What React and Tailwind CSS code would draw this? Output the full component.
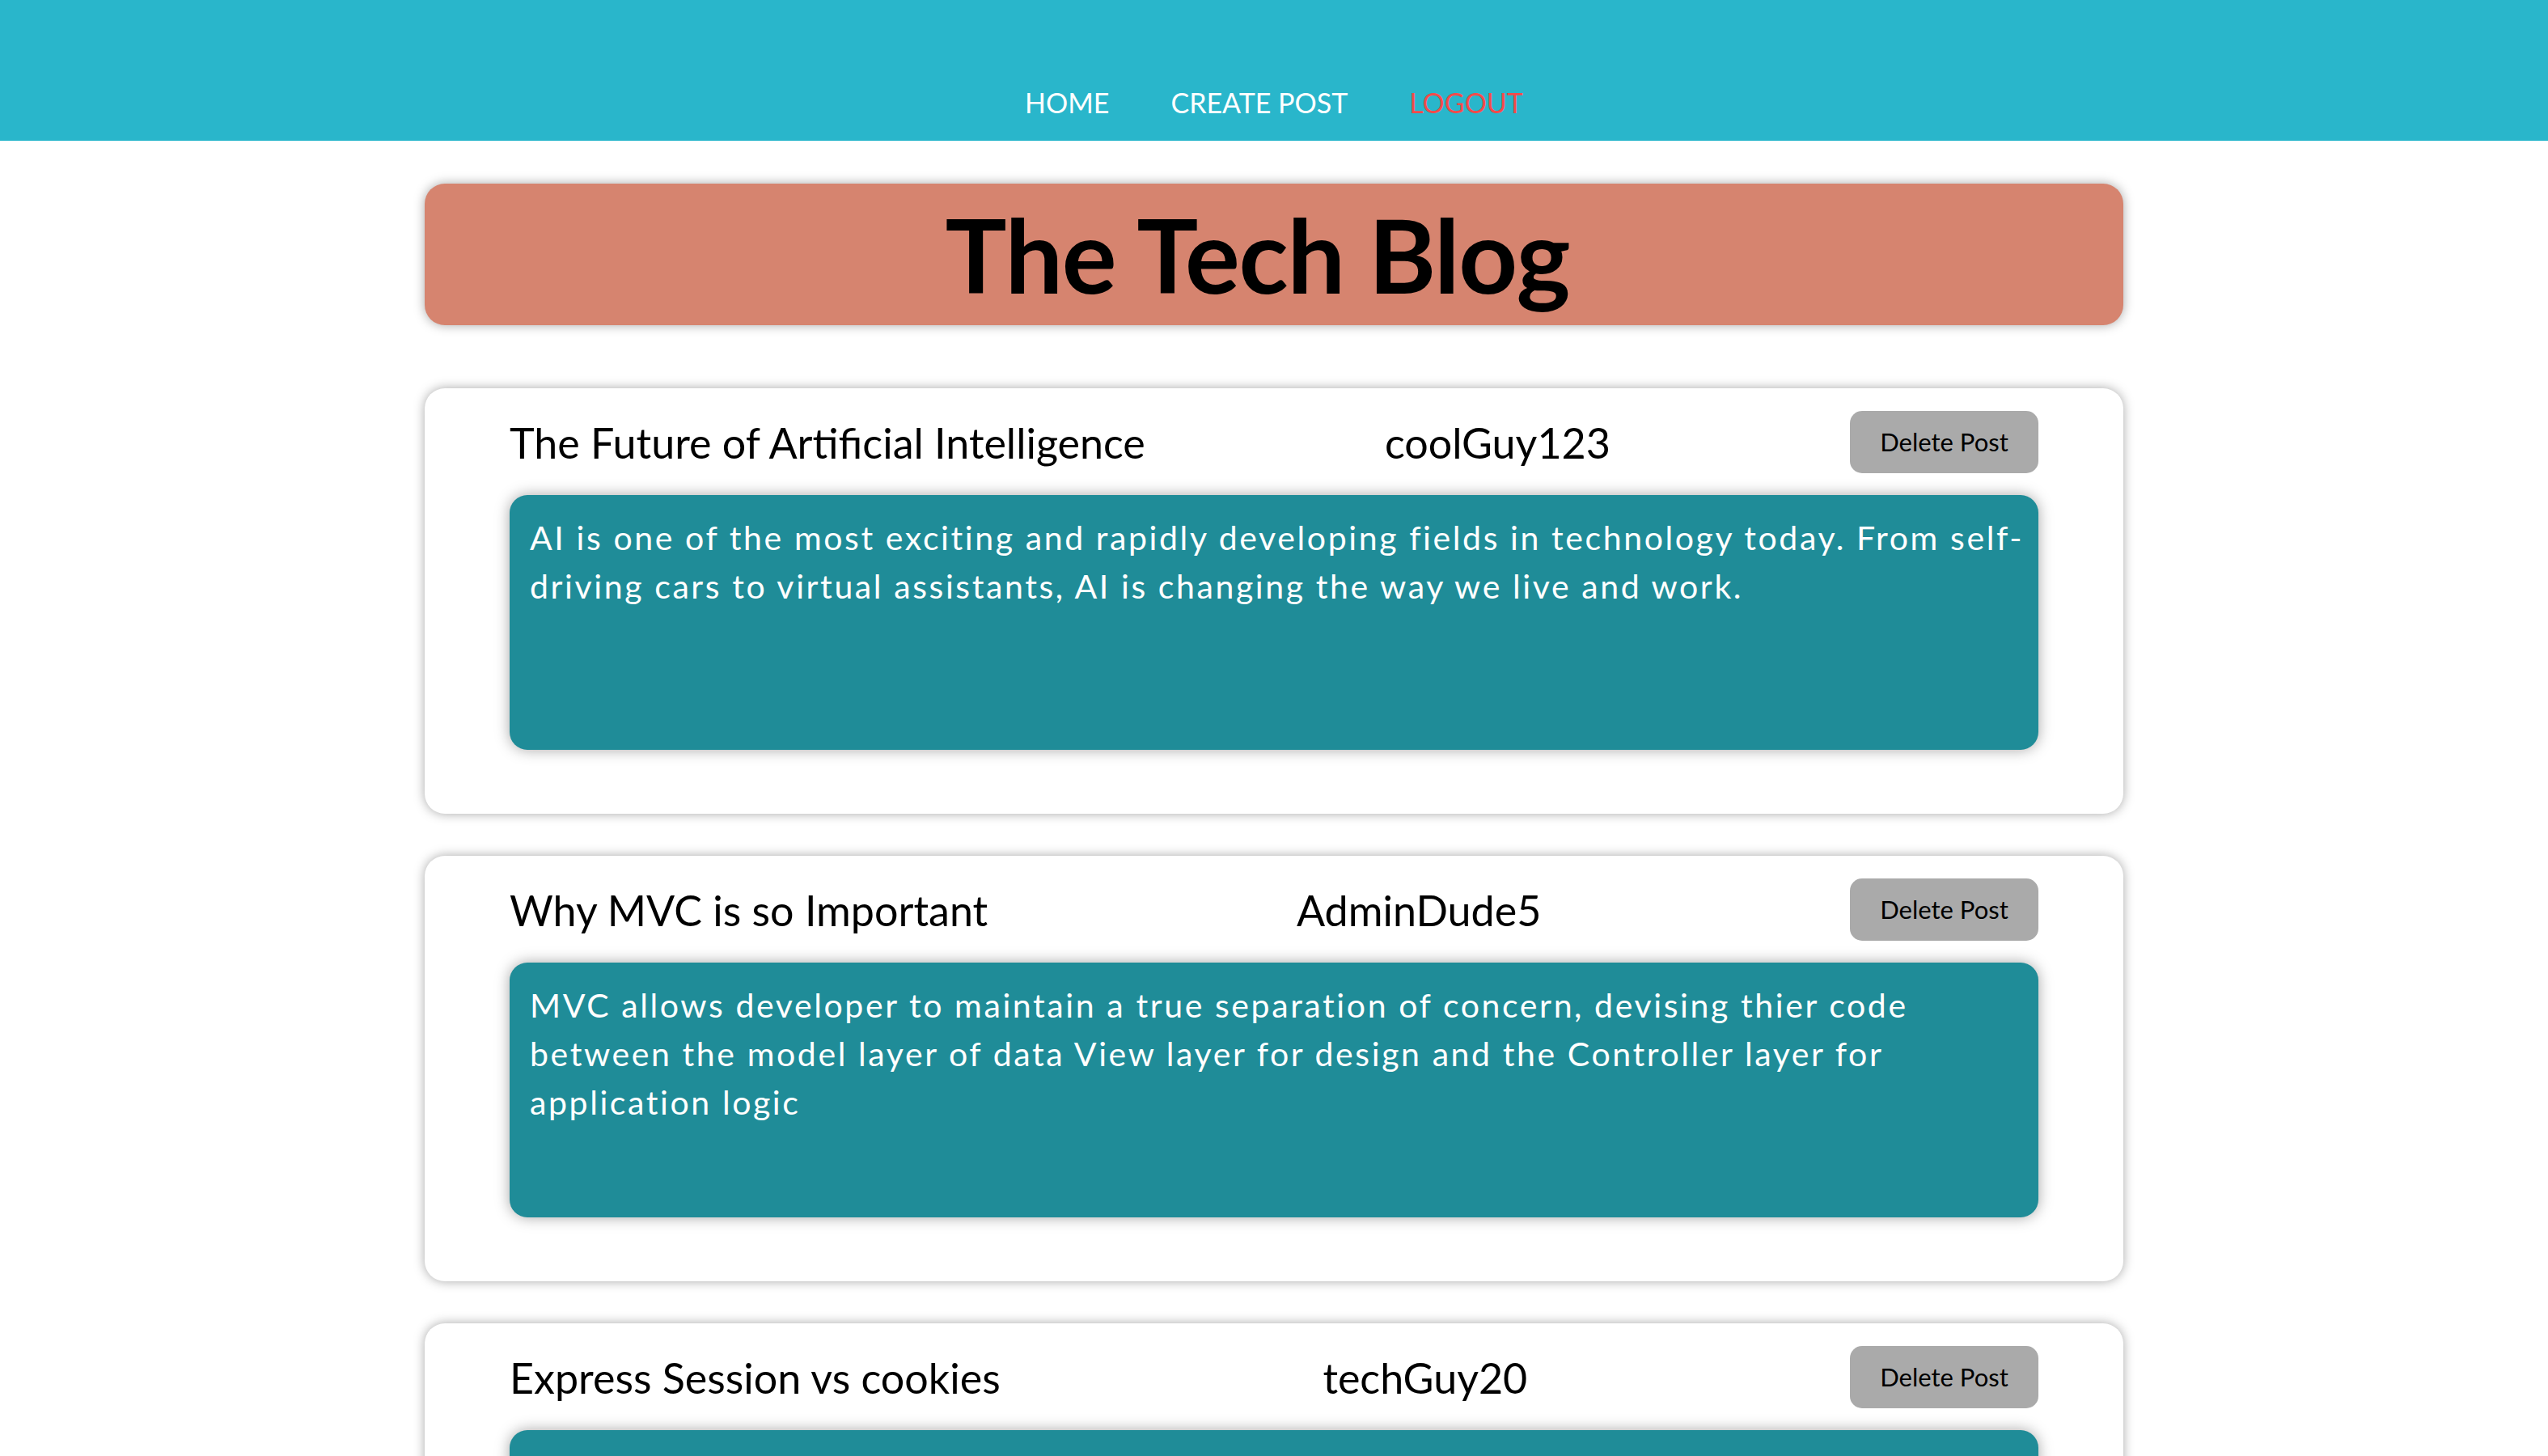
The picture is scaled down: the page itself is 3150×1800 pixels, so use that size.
import React from 'react';

const posts = [
  {
    title: 'The Future of Artificial Intelligence',
    author: 'coolGuy123',
    body: 'AI is one of the most exciting and rapidly developing fields in technology today. From self-driving cars to virtual assistants, AI is changing the way we live and work.',
  },
  {
    title: 'Why MVC is so Important',
    author: 'AdminDude5',
    body: 'MVC allows developer to maintain a true separation of concern, devising thier code between the model layer of data View layer for design and the Controller layer for application logic',
  },
  {
    title: 'Express Session vs cookies',
    author: 'techGuy20',
    body: 'Sessions keep user data on the server while cookies store it in the browser. Knowing when to use each one keeps your app secure and fast.',
  },
];

function PostCard({ post }) {
  return (
    <div className="bg-white rounded-[25px] shadow-[0_0_14px_rgba(0,0,0,0.35)] px-[105px] pt-[28px] pb-[79px]">
      <div className="flex items-center justify-between h-[77px]">
        <h2 className="text-[52px] leading-[60px] text-black">{post.title}</h2>
        <span className="text-[52px] leading-[60px] text-black">{post.author}</span>
        <button className="h-[77px] w-[233px] rounded-[15px] bg-[#aaaaaa] text-[31px] text-black">
          Delete Post
        </button>
      </div>
      <div className="mt-[27px] h-[315px] rounded-[22px] bg-[#1f8c98] shadow-[0_0_18px_rgba(0,0,0,0.35)] pl-[25px] pr-[10px] py-[23px]">
        <p className="text-[41px] leading-[60px] tracking-[2.6px] text-white">{post.body}</p>
      </div>
    </div>
  );
}

export default function App() {
  return (
    <div className="min-h-screen bg-white font-['Lato','Liberation_Sans',sans-serif]">
      <nav className="h-[174px] bg-[#29b6cb] flex justify-center items-center pt-[80px] gap-[76px] text-[34px] leading-[40px]">
        <a className="text-white">HOME</a>
        <a className="text-white">CREATE POST</a>
        <a className="text-[#f44a4a]">LOGOUT</a>
      </nav>
      <main className="w-[2100px] mx-auto pt-[53px] flex flex-col">
        <header className="h-[175px] rounded-[25px] bg-[#d6846f] shadow-[0_0_14px_rgba(0,0,0,0.35)] flex items-center justify-center pr-[41px]">
          <h1 className="text-[127px] font-bold tracking-[-1.2px] text-black leading-none">The Tech Blog</h1>
        </header>
        <div className="mt-[78px] flex flex-col gap-[52px]">
          {posts.map((p) => (
            <PostCard key={p.title} post={p} />
          ))}
        </div>
      </main>
    </div>
  );
}
